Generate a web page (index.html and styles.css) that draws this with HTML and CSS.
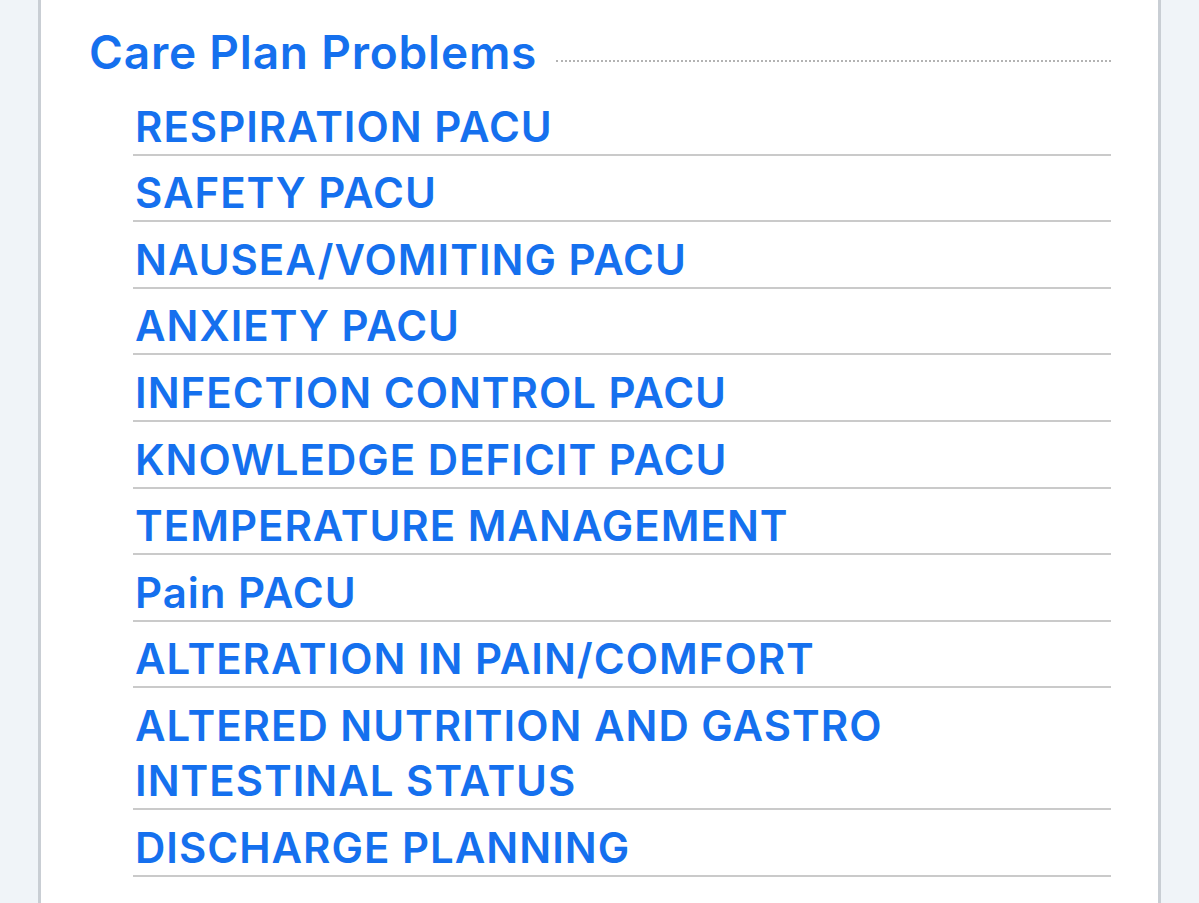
FILE: index.html
```html
<!DOCTYPE html>
<html>
<head>
<meta charset="utf-8">
<link rel="stylesheet" href="styles.css">
<title>Care Plan Problems</title>
</head>
<body>
<div class="page">
  <section class="card">
    <header class="section-head">
      <h2 class="section-title">Care Plan Problems</h2>
      <span class="leader"></span>
    </header>
    <ul class="problems">
      <li class="problem">RESPIRATION PACU</li>
      <li class="problem">SAFETY PACU</li>
      <li class="problem">NAUSEA/VOMITING PACU</li>
      <li class="problem">ANXIETY PACU</li>
      <li class="problem">INFECTION CONTROL PACU</li>
      <li class="problem">KNOWLEDGE DEFICIT PACU</li>
      <li class="problem">TEMPERATURE MANAGEMENT</li>
      <li class="problem">Pain PACU</li>
      <li class="problem">ALTERATION IN PAIN/COMFORT</li>
      <li class="problem"><span class="problem-text">ALTERED NUTRITION AND GASTRO INTESTINAL STATUS</span></li>
      <li class="problem">DISCHARGE PLANNING</li>
    </ul>
  </section>
</div>
</body>
</html>
```
FILE: styles.css
```css
html, body {
  margin: 0;
  padding: 0;
  background: #f0f4f8;
  height: 100%;
  overflow: hidden;
}

.page {
  padding: 0 38px;
  height: 100%;
}

.card {
  background: #ffffff;
  border-left: 3px solid #c9ced4;
  border-right: 3px solid #c9ced4;
  min-height: 100%;
  padding: 24px 47px 0 48px;
  box-sizing: border-box;
  font-family: "Inter", "Liberation Sans", sans-serif;
  color: #1570ee;
}

.section-head {
  display: flex;
  align-items: baseline;
  gap: 19px;
}

.section-title {
  margin: 0;
  font-size: 46px;
  font-weight: 600;
  letter-spacing: 0.8px;
  line-height: 56px;
  white-space: nowrap;
}

.leader {
  flex: 1;
  border-bottom: 2px dotted #b3b3b3;
  transform: translateY(-7px);
}

.problems {
  list-style: none;
  margin: 9px 0 0;
  padding: 0 0 0 44px;
}

.problem {
  font-size: 42px;
  font-weight: 600;
  letter-spacing: 1px;
  line-height: 55px;
  padding: 9.6px 0 0 2px;
  border-bottom: 2px solid #cacaca;
}

.problem-text {
  display: block;
  max-width: 800px;
}
```
